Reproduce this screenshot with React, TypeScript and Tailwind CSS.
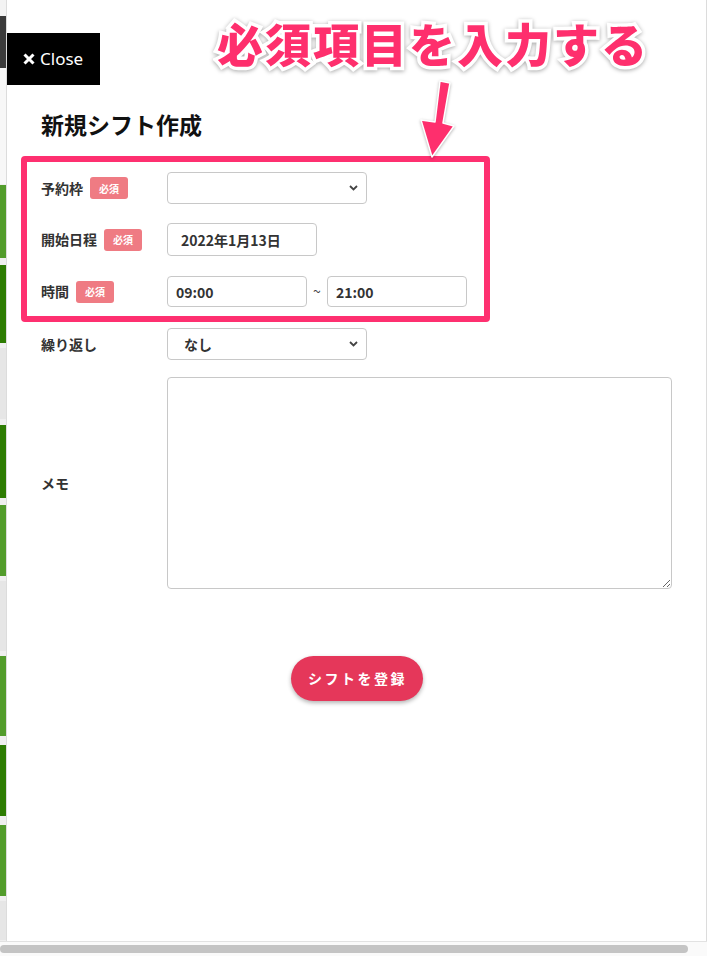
import React from "react";

const JP = "font-['Noto_Sans_CJK_JP','Noto_Sans',sans-serif]";

const strip: { h: number; c: string; gap?: number }[] = [
  { h: 16, c: "bg-[#f3f3f3]" },
  { h: 52, c: "bg-[#3a3a3a]" },
  { h: 116, c: "bg-[#f7f7f7]" },
  { h: 73, c: "bg-[#529c2b]", gap: 1 },
  { h: 78, c: "bg-[#2d7c02]", gap: 7 },
  { h: 71, c: "bg-[#e6e6e6]", gap: 5 },
  { h: 73, c: "bg-[#2d7c02]", gap: 6 },
  { h: 71, c: "bg-[#529c2b]", gap: 7 },
  { h: 70, c: "bg-[#e6e6e6]", gap: 5 },
  { h: 80, c: "bg-[#529c2b]", gap: 5 },
  { h: 71, c: "bg-[#2d7c02]", gap: 9 },
  { h: 71, c: "bg-[#529c2b]", gap: 9 },
  { h: 39, c: "bg-[#e6e6e6]", gap: 5 },
];

function Badge() {
  return (
    <span className="ml-[7px] inline-flex h-[22px] w-[38px] items-center justify-center rounded-[3px] bg-[#ef7b83] text-[10px] font-bold text-white">
      必須
    </span>
  );
}

function Label({ text, required }: { text: string; required?: boolean }) {
  return (
    <div className="flex w-[126px] shrink-0 items-center text-[14px] font-bold text-[#333]">
      <span>{text}</span>
      {required && <Badge />}
    </div>
  );
}

function Chevron() {
  return (
    <svg
      className="pointer-events-none absolute right-[9px] top-1/2 -translate-y-1/2"
      width="9"
      height="6"
      viewBox="0 0 9 6"
    >
      <path d="M1 1l3.5 3.5L8 1" fill="none" stroke="#444" strokeWidth="1.8" />
    </svg>
  );
}

function Select({ value }: { value: string }) {
  return (
    <div className="relative w-[200px]">
      <select
        defaultValue={value}
        className={`h-[32px] w-full appearance-none rounded-[4px] border border-[#c8c8c8] bg-white pl-[16px] text-[14px] font-bold text-[#333] outline-none ${JP}`}
      >
        <option value={value}>{value}</option>
      </select>
      <Chevron />
    </div>
  );
}

export default function App() {
  return (
    <div className={`relative h-[956px] w-[707px] overflow-hidden bg-white ${JP}`}>
      <div className="flex h-[942px] border-b border-[#e2e2e2]">
        <div className="flex w-[6px] shrink-0 flex-col bg-[#efefef]">
          {strip.map((s, i) => (
            <div
              key={i}
              className={s.c}
              style={{ height: s.h, marginTop: s.gap ?? 0 }}
            />
          ))}
        </div>

        <div className="flex flex-1 flex-col border-x border-[#dcdcdc] pt-[33px]">
          <button className="flex h-[52px] w-[93px] items-center gap-[5px] bg-black pl-[16px] text-[17px] text-white">
            <svg width="12" height="12" viewBox="0 0 12 12">
              <path d="M1.5 1.5l9 9M10.5 1.5l-9 9" stroke="white" strokeWidth="3" />
            </svg>
            <span className="font-['Noto_Sans',sans-serif]">Close</span>
          </button>

          <h2 className="ml-[34px] mt-[23px] text-[23px] font-bold leading-[32px] text-[#111]">
            新規シフト作成
          </h2>

          <div className="ml-[14px] mt-[16px] w-[469px] rounded-[4px] border-[6px] border-[#fe3070] pb-[9px] pl-[14px] pt-[10px]">
            <div className="flex items-center">
              <Label text="予約枠" required />
              <Select value="" />
            </div>
            <div className="mt-[19px] flex items-center">
              <Label text="開始日程" required />
              <input
                readOnly
                value="2022年1月13日"
                className={`h-[33px] w-[150px] rounded-[4px] border border-[#c8c8c8] pl-[13px] text-[14px] font-bold text-[#333] outline-none ${JP}`}
              />
            </div>
            <div className="mt-[20px] flex items-center">
              <Label text="時間" required />
              <input
                readOnly
                value="09:00"
                className={`h-[31px] w-[140px] rounded-[4px] border border-[#c8c8c8] pl-[8px] text-[14px] font-bold text-[#333] outline-none ${JP}`}
              />
              <span className="w-[20px] text-center text-[14px] text-[#444]">~</span>
              <input
                readOnly
                value="21:00"
                className={`h-[31px] w-[140px] rounded-[4px] border border-[#c8c8c8] pl-[8px] text-[14px] font-bold text-[#333] outline-none ${JP}`}
              />
            </div>
          </div>

          <div className="ml-[34px] mt-[6px] flex items-center">
            <Label text="繰り返し" />
            <Select value="なし" />
          </div>

          <div className="ml-[34px] mt-[17px] flex items-center">
            <Label text="メモ" />
            <textarea
              className="h-[212px] w-[505px] rounded-[4px] border border-[#c8c8c8] outline-none"
            />
          </div>

          <div className="mt-[67px] flex justify-center">
            <button className="h-[45px] w-[132px] rounded-full bg-[#e5375a] pl-[2px] text-[14px] font-bold tracking-[2.5px] text-white shadow-[0_2px_4px_rgba(0,0,0,0.3)]">
              シフトを登録
            </button>
          </div>
        </div>
      </div>

      <div className="flex h-[14px] items-center bg-[#fafafa]">
        <div className="h-[8px] w-[688px] rounded-full bg-[#c4c4c4]" />
      </div>

      {/* annotation overlay */}
      <div className="absolute left-[217px] top-[19px] text-[46px] font-black leading-none tracking-[2px] text-[#fe2f6d] [-webkit-text-stroke:7px_white] [filter:drop-shadow(0_1px_2px_rgba(0,0,0,0.35))] [paint-order:stroke_fill]">
        必須項目を入力する
      </div>
      <svg
        className="absolute left-0 top-0 [filter:drop-shadow(0_1px_1.5px_rgba(0,0,0,0.3))]"
        width="707"
        height="170"
        viewBox="0 0 707 170"
      >
        <polygon
          points="440,81 450,83 443,123 454,126 432,157 421,120 435,122"
          fill="#fe2f6d"
          stroke="white"
          strokeWidth="1.5"
          strokeLinejoin="round"
        />
      </svg>
    </div>
  );
}
